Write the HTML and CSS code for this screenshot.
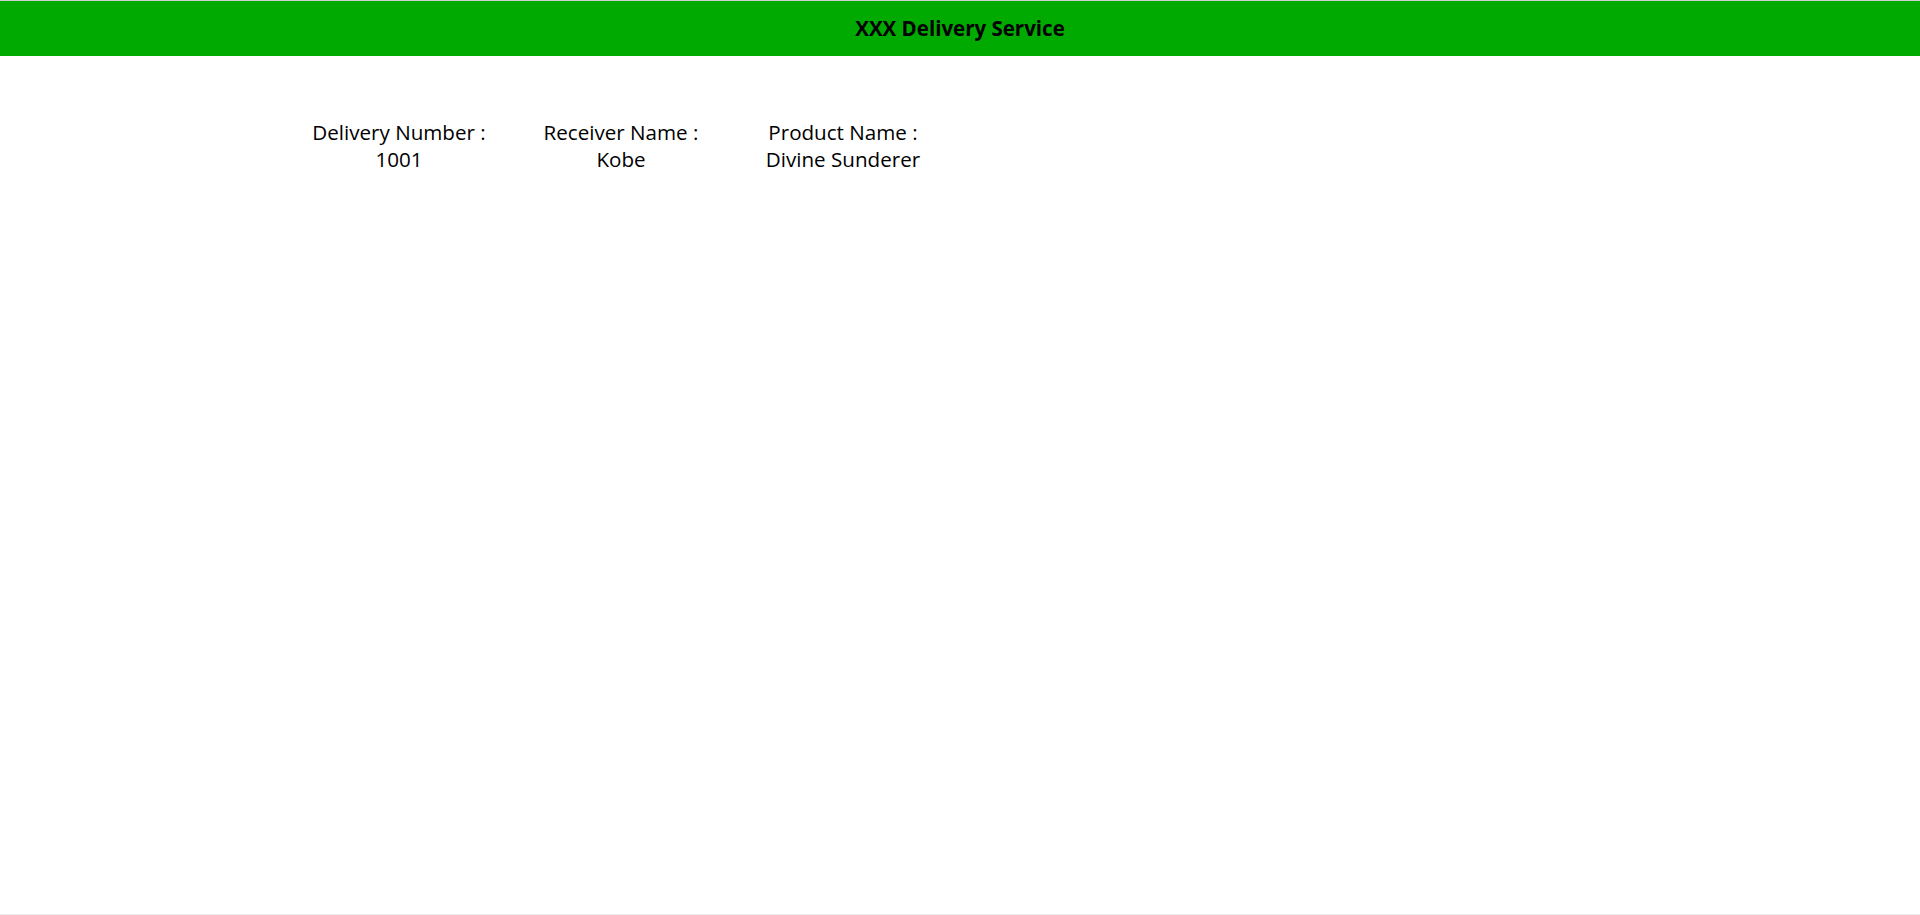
FILE: index.html
```html
<!DOCTYPE html>
<html lang="en">
<head>
<meta charset="utf-8">
<title>XXX Delivery Service</title>
<link rel="stylesheet" href="styles.css">
</head>
<body>
<div class="page">
  <header class="topbar">
    <h1 class="title">XXX Delivery Service</h1>
  </header>
  <main class="content">
    <div class="info-row">
      <div class="info-col">
        <div class="label">Delivery Number :</div>
        <div class="value">1001</div>
      </div>
      <div class="info-col">
        <div class="label">Receiver Name :</div>
        <div class="value">Kobe</div>
      </div>
      <div class="info-col">
        <div class="label">Product Name :</div>
        <div class="value">Divine Sunderer</div>
      </div>
    </div>
  </main>
</div>
</body>
</html>
```

FILE: styles.css
```css
html, body {
  margin: 0;
  padding: 0;
  height: 100%;
}
body {
  font-family: "Open Sans", "Noto Sans", "Liberation Sans", sans-serif;
  color: #000;
  background: #fff;
}
.page {
  box-sizing: border-box;
  min-height: 100vh;
  border-top: 1px solid #cfcfcf;
  border-bottom: 1px solid #ebebeb;
  display: flex;
  flex-direction: column;
}
.topbar {
  background: #00aa00;
  height: 55px;
  display: flex;
  align-items: center;
  justify-content: center;
}
.title {
  margin: 0;
  font-size: 20.5px;
  font-weight: 700;
  line-height: 27px;
}
.content {
  flex: 1;
  padding: 63px 0 0 288px;
}
.info-row {
  display: grid;
  grid-template-columns: repeat(3, 222px);
}
.info-col {
  text-align: center;
  font-size: 20.6px;
  line-height: 27px;
}
```
